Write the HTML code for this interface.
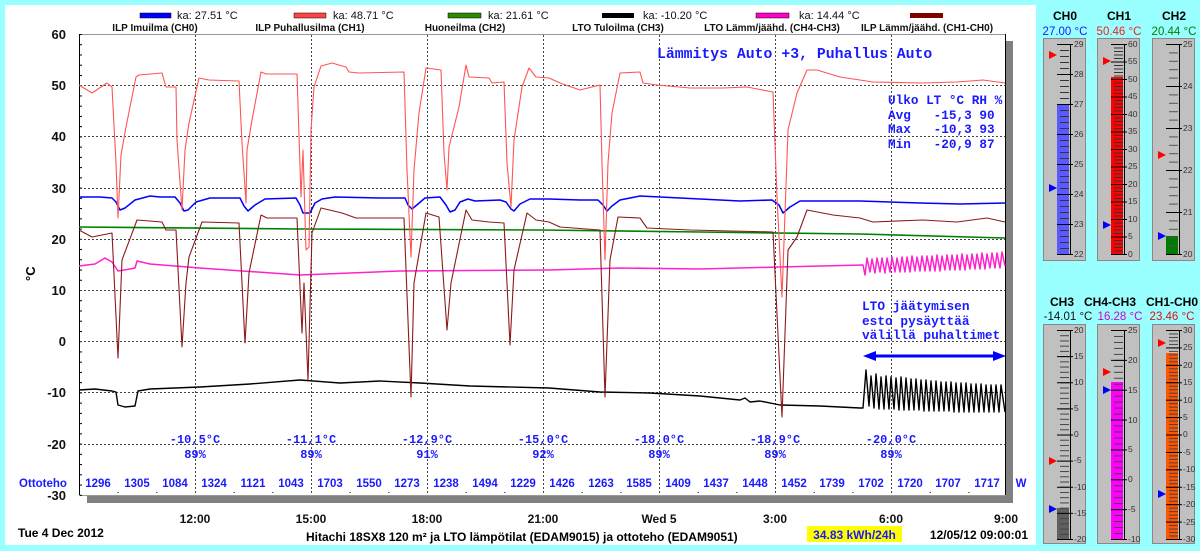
<!DOCTYPE html>
<html><head><meta charset="utf-8"><style>
html,body{margin:0;padding:0;background:#99ffff;width:1200px;height:551px;overflow:hidden}
svg{display:block}
text{font-family:"Liberation Sans",sans-serif}
text.m,.m text{font-family:"Liberation Mono",monospace;font-weight:bold;fill:#1a1aff}
.b{font-weight:bold}
</style></head><body>
<svg width="1200" height="551" viewBox="0 0 1200 551" xmlns="http://www.w3.org/2000/svg">
<defs>
<pattern id="yt" x="0" y="34" width="6" height="10.24" patternUnits="userSpaceOnUse"><rect width="4" height="1" fill="#000"/></pattern>
<pattern id="xt" x="79" y="0" width="38.67" height="5" patternUnits="userSpaceOnUse"><rect width="1" height="3" fill="#000"/></pattern>
<pattern id="m0" x="0" y="44" width="10" height="6" patternUnits="userSpaceOnUse"><rect width="10" height="1" fill="#333"/></pattern>
<pattern id="M0" x="0" y="44" width="20" height="30" patternUnits="userSpaceOnUse"><rect width="20" height="1" fill="#000"/></pattern>
<pattern id="m1" x="0" y="44" width="10" height="3.5" patternUnits="userSpaceOnUse"><rect width="10" height="1" fill="#333"/></pattern>
<pattern id="M1" x="0" y="44" width="20" height="17.5" patternUnits="userSpaceOnUse"><rect width="20" height="1" fill="#000"/></pattern>
<pattern id="m2" x="0" y="44" width="10" height="8.4" patternUnits="userSpaceOnUse"><rect width="10" height="1" fill="#555"/></pattern>
<pattern id="M2" x="0" y="44" width="20" height="42" patternUnits="userSpaceOnUse"><rect width="20" height="1" fill="#000"/></pattern>
<pattern id="m3" x="0" y="330" width="10" height="5.225" patternUnits="userSpaceOnUse"><rect width="10" height="1" fill="#444"/></pattern>
<pattern id="M3" x="0" y="330" width="20" height="26.125" patternUnits="userSpaceOnUse"><rect width="20" height="1" fill="#000"/></pattern>
<pattern id="m4" x="0" y="330" width="10" height="5.97" patternUnits="userSpaceOnUse"><rect width="10" height="1" fill="#444"/></pattern>
<pattern id="M4" x="0" y="330" width="20" height="29.857" patternUnits="userSpaceOnUse"><rect width="20" height="1" fill="#000"/></pattern>
<pattern id="m5" x="0" y="330" width="10" height="3.483" patternUnits="userSpaceOnUse"><rect width="10" height="1" fill="#444"/></pattern>
<pattern id="M5" x="0" y="330" width="20" height="17.417" patternUnits="userSpaceOnUse"><rect width="20" height="1" fill="#000"/></pattern>
</defs>

<rect x="5" y="5" width="1031" height="540" fill="#fff"/>

<rect x="1006" y="41" width="7" height="462" fill="#808080"/>
<rect x="87" y="496" width="926" height="7" fill="#808080"/>

<line x1="79" y1="34.5" x2="1006" y2="34.5" stroke="#999"/>
<line x1="1005.5" y1="34" x2="1005.5" y2="496" stroke="#000"/>
<line x1="79.5" y1="34" x2="79.5" y2="496" stroke="#000"/>
<line x1="79" y1="495.5" x2="1006" y2="495.5" stroke="#999"/>
<rect x="80" y="34" width="4" height="462" fill="url(#yt)"/>
<rect x="80" y="492" width="926" height="3" fill="url(#xt)"/>

<g stroke="#444" stroke-dasharray="2,2" stroke-width="1">
<line x1="80" y1="85.5" x2="1005" y2="85.5"/><line x1="80" y1="136.5" x2="1005" y2="136.5"/>
<line x1="80" y1="188.5" x2="1005" y2="188.5"/><line x1="80" y1="239.5" x2="1005" y2="239.5"/>
<line x1="80" y1="290.5" x2="1005" y2="290.5"/><line x1="80" y1="341.5" x2="1005" y2="341.5"/>
<line x1="80" y1="392.5" x2="1005" y2="392.5"/><line x1="80" y1="444.5" x2="1005" y2="444.5"/>
<line x1="195.5" y1="35" x2="195.5" y2="495"/><line x1="311.5" y1="35" x2="311.5" y2="495"/>
<line x1="427.5" y1="35" x2="427.5" y2="495"/><line x1="543.5" y1="35" x2="543.5" y2="495"/>
<line x1="659.5" y1="35" x2="659.5" y2="495"/><line x1="775.5" y1="35" x2="775.5" y2="495"/>
<line x1="891.5" y1="35" x2="891.5" y2="495"/>
</g>

<g fill="none" stroke-width="1.1" stroke-linejoin="round">
<polyline stroke="#008000" stroke-width="1.6" points="79,227 300,229 540,230 700,232 860,234 1005,238"/>
<polyline stroke="#ff22cc" stroke-width="1.5" points="79,266 95,264 105,258 112,262 118,271 130,269 135,268 137,261 150,264 200,268 300,275 400,271 549,270 620,268 700,269 780,267 863,265 865,275 867,258 870,272 872,259 875,273 877,258 880,272 882,258 885,273 887,258 890,272 892,257 895,272 897,258 900,272 902,257 905,272 907,257 910,272 912,256 915,271 917,257 920,271 922,256 925,271 927,256 930,271 932,256 935,271 937,255 940,271 942,256 945,270 947,255 950,270 952,255 955,270 957,255 960,270 962,254 965,270 967,255 970,269 972,254 975,269 977,254 980,269 982,253 985,269 987,254 990,268 992,253 995,268 997,253 1000,268 1002,252 1005,266"/>
<polyline stroke="#000" stroke-width="1.4" points="79,390 95,389 112,391 116,392 118,405 125,407 135,406 138,391 150,389 200,387 250,384 300,380 340,383 380,381 420,383 470,386 549,388 600,392 650,393 700,396 740,400 745,398 750,402 760,401 780,405 820,406 860,408 863,408 866,370 869,406 871,376 874,408 876,374 879,409 881,377 884,409 886,376 889,409 891,377 894,409 896,378 899,410 901,377 904,410 906,378 909,410 911,379 914,410 916,379 919,410 921,380 924,411 926,380 929,411 931,381 934,411 936,381 939,411 941,382 944,411 946,382 949,411 951,382 954,412 956,383 959,412 961,383 964,412 966,383 969,412 971,384 974,412 976,384 979,412 981,384 984,412 986,385 989,412 991,385 994,412 996,385 999,412 1001,385 1005,412"/>
<polyline stroke="#0000ff" stroke-width="1.5" points="79,197 100,197 112,198 116,202 120,210 125,208 135,200 150,196 160,197 175,197 180,203 184,211 188,210 196,202 210,198 240,198 244,206 248,211 255,205 265,199 296,198 300,205 303,213 310,213 315,203 322,199 335,197 380,198 405,198 408,205 412,209 418,204 425,198 440,197 446,205 450,212 455,210 460,202 468,199 475,201 500,200 506,202 511,209 514,211 520,204 530,199 549,199 580,200 598,200 603,205 607,211 612,206 620,200 640,196 680,198 740,201 772,200 779,205 783,213 790,207 800,201 860,201 920,203 960,204 1005,203"/>
<polyline stroke="#8b1a1a" points="79,230 92,237 112,233 118,358 122,260 137,220 162,222 166,230 176,230 182,347 186,283 189,257 202,222 239,223 245,343 249,273 261,215 267,218 297,218 302,333 304,283 308,380 312,233 321,208 342,213 356,218 404,218 411,397 414,283 426,213 439,217 447,330 451,283 466,210 472,220 489,222 504,223 510,345 514,270 527,213 536,220 549,222 560,227 600,230 605,397 610,260 618,217 640,218 647,228 690,230 773,232 782,417 788,250 797,237 807,210 833,215 860,218 873,222 923,220 957,222 987,218 1005,222"/>
<polyline stroke="#ff5555" points="79,85 92,93 107,83 112,87 116,163 118,218 121,155 126,127 136,77 139,75 162,73 166,87 176,87 177,140 182,210 185,150 189,123 199,78 209,80 239,81 242,143 246,203 247,150 252,120 261,72 266,74 297,74 301,197 303,150 306,250 309,247 311,130 314,87 321,66 332,63 346,67 349,72 359,73 404,72 407,170 411,257 414,170 419,113 426,68 441,70 444,153 447,190 449,147 459,107 466,65 469,77 489,78 492,83 504,82 507,163 511,207 514,140 522,87 529,68 536,77 549,78 560,83 580,90 600,85 602,163 605,260 608,163 612,113 620,73 640,72 643,83 657,85 690,88 723,88 747,87 773,92 777,197 782,297 788,130 797,93 807,70 817,70 840,77 873,82 923,83 957,82 983,80 1005,83"/>
</g>

<line x1="870" y1="356" x2="998" y2="356" stroke="#0000ff" stroke-width="3"/>
<polygon points="863,356 876,351 876,361" fill="#0000ff"/>
<polygon points="1006,356 993,351 993,361" fill="#0000ff"/>

<text class="m" x="657" y="58" font-size="14.8">Lämmitys Auto +3, Puhallus Auto</text>
<text class="m" x="888" y="104" font-size="12.7">Ulko LT °C RH %</text>
<text class="m" x="888" y="119" font-size="12.7" xml:space="preserve">Avg   -15,3 90</text>
<text class="m" x="888" y="133" font-size="12.7" xml:space="preserve">Max   -10,3 93</text>
<text class="m" x="888" y="148" font-size="12.7" xml:space="preserve">Min   -20,9 87</text>
<text class="m" x="862" y="310" font-size="12.8">LTO jäätymisen</text>
<text class="m" x="862" y="325" font-size="12.8">esto pysäyttää</text>
<text class="m" x="862" y="339" font-size="12.8">välillä puhaltimet</text>
<g font-size="12" text-anchor="middle">
<text class="m" x="195" y="443">-10,5°C</text><text class="m" x="195" y="458">89%</text>
<text class="m" x="311" y="443">-11,1°C</text><text class="m" x="311" y="458">89%</text>
<text class="m" x="427" y="443">-12,9°C</text><text class="m" x="427" y="458">91%</text>
<text class="m" x="543" y="443">-15,0°C</text><text class="m" x="543" y="458">92%</text>
<text class="m" x="659" y="443">-18,0°C</text><text class="m" x="659" y="458">89%</text>
<text class="m" x="775" y="443">-18,9°C</text><text class="m" x="775" y="458">89%</text>
<text class="m" x="891" y="443">-20,0°C</text><text class="m" x="891" y="458">89%</text>
</g>

<g class="b" font-size="11.5" fill="#1a1aff" text-anchor="middle">
<text x="43" y="487">Ottoteho</text>
<text x="98" y="487">1296</text><text x="137" y="487">1305</text><text x="175" y="487">1084</text><text x="214" y="487">1324</text>
<text x="253" y="487">1121</text><text x="291" y="487">1043</text><text x="330" y="487">1703</text><text x="369" y="487">1550</text>
<text x="407" y="487">1273</text><text x="446" y="487">1238</text><text x="485" y="487">1494</text><text x="523" y="487">1229</text>
<text x="562" y="487">1426</text><text x="601" y="487">1263</text><text x="639" y="487">1585</text><text x="678" y="487">1409</text>
<text x="716" y="487">1437</text><text x="755" y="487">1448</text><text x="794" y="487">1452</text><text x="832" y="487">1739</text>
<text x="871" y="487">1702</text><text x="910" y="487">1720</text><text x="948" y="487">1707</text><text x="987" y="487">1717</text>
<text x="1021" y="487">W</text>
</g>

<g class="b" font-size="13" text-anchor="end" fill="#111">
<text x="66" y="39">60</text><text x="66" y="90">50</text><text x="66" y="141">40</text><text x="66" y="193">30</text>
<text x="66" y="244">20</text><text x="66" y="295">10</text><text x="66" y="346">0</text><text x="66" y="397">-10</text>
<text x="66" y="449">-20</text><text x="66" y="500">-30</text>
</g>
<text class="b" font-size="13" transform="translate(35,281) rotate(-90)">°C</text>

<g class="b" font-size="12" text-anchor="middle" fill="#111">
<text x="195" y="523">12:00</text><text x="311" y="523">15:00</text><text x="427" y="523">18:00</text>
<text x="543" y="523">21:00</text><text x="659" y="523">Wed 5</text><text x="775" y="523">3:00</text>
<text x="891" y="523">6:00</text><text x="1006" y="523">9:00</text>
</g>
<text class="b" font-size="12" x="18" y="537">Tue 4 Dec 2012</text>
<text class="b" font-size="12" x="306" y="541">Hitachi 18SX8 120 m² ja LTO lämpötilat (EDAM9015) ja ottoteho (EDAM9051)</text>
<rect x="807" y="526" width="95" height="16" fill="#ffff00"/>
<text class="b" font-size="12" x="854.5" y="539" text-anchor="middle" fill="#1a1aff">34.83 kWh/24h</text>
<text class="b" font-size="12" x="1028" y="539" text-anchor="end">12/05/12 09:00:01</text>

<g font-size="11" fill="#111">
<rect x="140" y="13" width="31" height="5" fill="#0000ff" stroke="#000" stroke-width=".5"/><text x="177" y="19">ka: 27.51 °C</text>
<rect x="294" y="13" width="32" height="5" fill="#ff4444" stroke="#000" stroke-width=".5"/><text x="333" y="19">ka: 48.71 °C</text>
<rect x="448" y="13" width="33" height="5" fill="#2e8b00" stroke="#000" stroke-width=".5"/><text x="488" y="19">ka: 21.61 °C</text>
<rect x="602" y="13" width="32" height="5" fill="#000"/><text x="643" y="19">ka: -10.20 °C</text>
<rect x="756" y="13" width="33" height="5" fill="#ff00cc" stroke="#000" stroke-width=".5"/><text x="799" y="19">ka: 14.44 °C</text>
<rect x="910" y="13" width="33" height="5" fill="#800000"/>
</g>
<g class="b" font-size="10" fill="#111" text-anchor="middle">
<text x="155" y="31">ILP Imuilma (CH0)</text><text x="310" y="31">ILP Puhallusilma (CH1)</text>
<text x="465" y="31">Huoneilma (CH2)</text><text x="618" y="31">LTO Tuloilma (CH3)</text>
<text x="772" y="31">LTO Lämm/jäähd. (CH4-CH3)</text><text x="927" y="31">ILP Lämm/jäähd. (CH1-CH0)</text>
</g>

<g class="b" font-size="12" text-anchor="middle">
<text x="1065" y="20">CH0</text><text x="1119" y="20">CH1</text><text x="1174" y="20">CH2</text>
<text x="1062" y="306">CH3</text><text x="1110" y="306">CH4-CH3</text><text x="1172" y="306">CH1-CH0</text>
</g>
<g font-size="11.5" text-anchor="middle">
<text x="1065" y="35" fill="#1a1aff">27.00 °C</text><text x="1119" y="35" fill="#ff1a1a">50.46 °C</text><text x="1174" y="35" fill="#008000">20.44 °C</text>
<text x="1068" y="320" fill="#111">-14.01 °C</text><text x="1120" y="320" fill="#cc00cc">16.28 °C</text><text x="1172" y="320" fill="#dd1111">23.46 °C</text>
</g>

<g fill="#c0c0c0" stroke="#888">
<rect x="1043.5" y="38.5" width="42" height="222"/><rect x="1097.5" y="38.5" width="42" height="222"/><rect x="1152.5" y="38.5" width="42" height="222"/>
<rect x="1043.5" y="324.5" width="42" height="219"/><rect x="1097.5" y="324.5" width="42" height="219"/><rect x="1152.5" y="324.5" width="42" height="219"/>
</g>
<rect x="1057" y="104" width="12" height="150" fill="#5a5aff"/>
<rect x="1111" y="77" width="12" height="177" fill="#ff0000"/>
<rect x="1166" y="236" width="12" height="18" fill="#007a00"/>
<rect x="1057" y="508" width="12" height="31" fill="#606060"/>
<rect x="1111" y="382" width="12" height="157" fill="#ff00ff"/>
<rect x="1166" y="353" width="12" height="186" fill="#ff5500"/>
<rect x="1060" y="44" width="9" height="211" fill="url(#m0)"/><rect x="1057" y="44" width="16" height="211" fill="url(#M0)"/>
<rect x="1114" y="44" width="9" height="211" fill="url(#m1)"/><rect x="1111" y="44" width="16" height="211" fill="url(#M1)"/>
<rect x="1169" y="44" width="9" height="211" fill="url(#m2)"/><rect x="1166" y="44" width="16" height="211" fill="url(#M2)"/>
<rect x="1060" y="330" width="9" height="210" fill="url(#m3)"/><rect x="1057" y="330" width="16" height="210" fill="url(#M3)"/>
<rect x="1114" y="330" width="9" height="210" fill="url(#m4)"/><rect x="1111" y="330" width="16" height="210" fill="url(#M4)"/>
<rect x="1169" y="330" width="9" height="210" fill="url(#m5)"/><rect x="1166" y="330" width="16" height="210" fill="url(#M5)"/>
<g stroke="#000">
<line x1="1070.5" y1="44" x2="1070.5" y2="255"/><line x1="1124.5" y1="44" x2="1124.5" y2="255"/><line x1="1179.5" y1="44" x2="1179.5" y2="255"/>
<line x1="1070.5" y1="330" x2="1070.5" y2="540"/><line x1="1124.5" y1="330" x2="1124.5" y2="540"/><line x1="1179.5" y1="330" x2="1179.5" y2="540"/>
</g>
<g fill="#ff0000">
<polygon points="1049,51 1057,55 1049,59"/><polygon points="1103,57 1111,61 1103,65"/><polygon points="1158,151 1166,155 1158,159"/>
<polygon points="1049,457 1057,461 1049,465"/><polygon points="1103,368 1111,372 1103,376"/><polygon points="1158,339 1166,343 1158,347"/>
</g>
<g fill="#0000ff">
<polygon points="1049,184 1057,188 1049,192"/><polygon points="1103,221 1111,225 1103,229"/><polygon points="1158,232 1166,236 1158,240"/>
<polygon points="1049,505 1057,509 1049,513"/><polygon points="1103,386 1111,390 1103,394"/><polygon points="1158,490 1166,494 1158,498"/>
</g>
<g font-size="8.5" fill="#333">
<text x="1074" y="47">29</text><text x="1074" y="77">28</text><text x="1074" y="107">27</text><text x="1074" y="137">26</text><text x="1074" y="167">25</text><text x="1074" y="197">24</text><text x="1074" y="227">23</text><text x="1074" y="257">22</text>
<text x="1128" y="47">60</text><text x="1128" y="64">55</text><text x="1128" y="82">50</text><text x="1128" y="99">45</text><text x="1128" y="117">40</text><text x="1128" y="134">35</text><text x="1128" y="152">30</text><text x="1128" y="169">25</text><text x="1128" y="187">20</text><text x="1128" y="204">15</text><text x="1128" y="222">10</text><text x="1128" y="239">5</text><text x="1128" y="257">0</text>
<text x="1183" y="47">25</text><text x="1183" y="89">24</text><text x="1183" y="131">23</text><text x="1183" y="173">22</text><text x="1183" y="215">21</text><text x="1183" y="257">20</text>
<text x="1074" y="333">20</text><text x="1074" y="359">15</text><text x="1074" y="385">10</text><text x="1074" y="411">5</text><text x="1074" y="437">0</text><text x="1074" y="463">-5</text><text x="1074" y="490">-10</text><text x="1074" y="516">-15</text><text x="1074" y="542">-20</text>
<text x="1128" y="333">25</text><text x="1128" y="363">20</text><text x="1128" y="393">15</text><text x="1128" y="423">10</text><text x="1128" y="452">5</text><text x="1128" y="482">0</text><text x="1128" y="512">-5</text><text x="1128" y="542">-10</text>
<text x="1183" y="333">30</text><text x="1183" y="350">25</text><text x="1183" y="368">20</text><text x="1183" y="385">15</text><text x="1183" y="403">10</text><text x="1183" y="420">5</text><text x="1183" y="437">0</text><text x="1183" y="455">-5</text><text x="1183" y="472">-10</text><text x="1183" y="490">-15</text><text x="1183" y="507">-20</text><text x="1183" y="525">-25</text><text x="1183" y="542">-30</text>
</g>
</svg>
</body></html>
